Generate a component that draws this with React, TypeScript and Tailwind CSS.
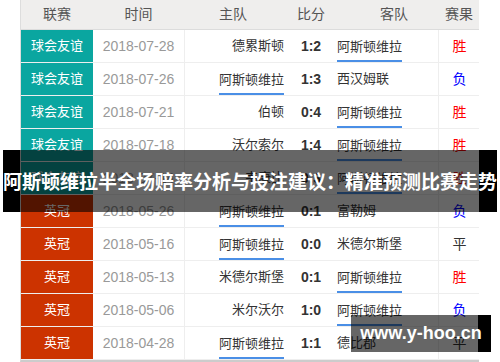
import React from 'react';

type Match = {
  league: 'friendly' | 'champ';
  date: string;
  home: string;
  score: string;
  away: string;
  result: '胜' | '负' | '平';
};

const VILLA = '阿斯顿维拉';

const matches: Match[] = [
  { league: 'friendly', date: '2018-07-28', home: '德累斯顿', score: '1:2', away: VILLA, result: '胜' },
  { league: 'friendly', date: '2018-07-26', home: VILLA, score: '1:3', away: '西汉姆联', result: '负' },
  { league: 'friendly', date: '2018-07-21', home: '伯顿', score: '0:4', away: VILLA, result: '胜' },
  { league: 'friendly', date: '2018-07-18', home: '沃尔索尔', score: '1:4', away: VILLA, result: '胜' },
  { league: 'friendly', date: '2018-07-14', home: '韦康比', score: '0:3', away: VILLA, result: '胜' },
  { league: 'champ', date: '2018-05-26', home: VILLA, score: '0:1', away: '富勒姆', result: '负' },
  { league: 'champ', date: '2018-05-16', home: VILLA, score: '0:0', away: '米德尔斯堡', result: '平' },
  { league: 'champ', date: '2018-05-13', home: '米德尔斯堡', score: '0:1', away: VILLA, result: '胜' },
  { league: 'champ', date: '2018-05-06', home: '米尔沃尔', score: '1:0', away: VILLA, result: '负' },
  { league: 'champ', date: '2018-04-28', home: VILLA, score: '1:1', away: '德比郡', result: '平' },
];

const resultColor = {
  '胜': 'text-[#ff0000]',
  '负': 'text-[#0000ff]',
  '平': 'text-[#333333]',
};

// 球队名称，阿斯顿维拉加蓝色下划线
const TeamName: React.FC<{ name: string }> = ({ name }) =>
  name === VILLA ? (
    <span className="self-end leading-[27px] border-b-2 border-[#4a8fe6]">{name}</span>
  ) : (
    <span>{name}</span>
  );

const cols = 'grid grid-cols-[72px_91px_107px_40px_107px_42px]';

export default function App() {
  return (
    <div className="relative w-[500px] h-[362px] bg-white overflow-hidden font-['Liberation_Sans','Noto_Sans_CJK_SC',sans-serif]">
      <div className="ml-[20px] w-[459px] border-l border-[#dddddd] border-b-2 border-b-[#cccccc]">
        <div className={`${cols} h-[30px] bg-[#efeeed] border-b border-[#dcdcdc] text-[14px] text-[#555555] items-center text-center`}>
          <div>联赛</div>
          <div>时间</div>
          <div className="pr-[9px]">主队</div>
          <div>比分</div>
          <div className="pl-[19px]">客队</div>
          <div>赛果</div>
        </div>
        {matches.map((m, i) => (
          <div key={i} className={`${cols} h-[33px] border-b border-[#eeeeee] text-[13px] text-[#333333]`}>
            <div
              className={`flex items-center justify-center text-white ${
                m.league === 'friendly' ? 'bg-[#0aa6a0]' : 'bg-[#cc3300]'
              }`}
            >
              {m.league === 'friendly' ? '球会友谊' : '英冠'}
            </div>
            <div className="flex items-center justify-center text-[14px] text-[#999999]">{m.date}</div>
            <div className="flex items-center justify-end pr-[7px] border-l border-[#eeeeee]">
              <TeamName name={m.home} />
            </div>
            <div className="flex items-center justify-center text-[14px] font-bold text-[#333333]">{m.score}</div>
            <div className="flex items-center pl-[6px]">
              <TeamName name={m.away} />
            </div>
            <div className={`flex items-center justify-center border-l border-[#eeeeee] text-[14px] ${resultColor[m.result]}`}>
              {m.result}
            </div>
          </div>
        ))}
      </div>

      {/* 标题横幅 */}
      <div className="absolute left-[3px] top-[150px] w-[494px] h-[62px]">
        <div className="flex h-full">
          <div className="w-[17px] bg-black" />
          <div className="flex-1 bg-black/60" />
          <div className="w-[18px] bg-black" />
        </div>
        <div className="absolute inset-0 flex items-center justify-center whitespace-nowrap text-white font-bold text-[19px] font-['Noto_Sans_CJK_SC',sans-serif]">
          阿斯顿维拉半全场赔率分析与投注建议：精准预测比赛走势
        </div>
      </div>

      {/* 水印 */}
      <div className="absolute left-[351px] top-[315px] w-[140px] h-[37px]">
        <div className="flex h-full">
          <div className="flex-1 bg-black/60" />
          <div className="w-[13px] bg-black" />
        </div>
        <div className="absolute inset-0 flex items-center justify-center text-white font-bold text-[18px] font-['Liberation_Sans',sans-serif]">
          www.y-hoo.cn
        </div>
      </div>
    </div>
  );
}
